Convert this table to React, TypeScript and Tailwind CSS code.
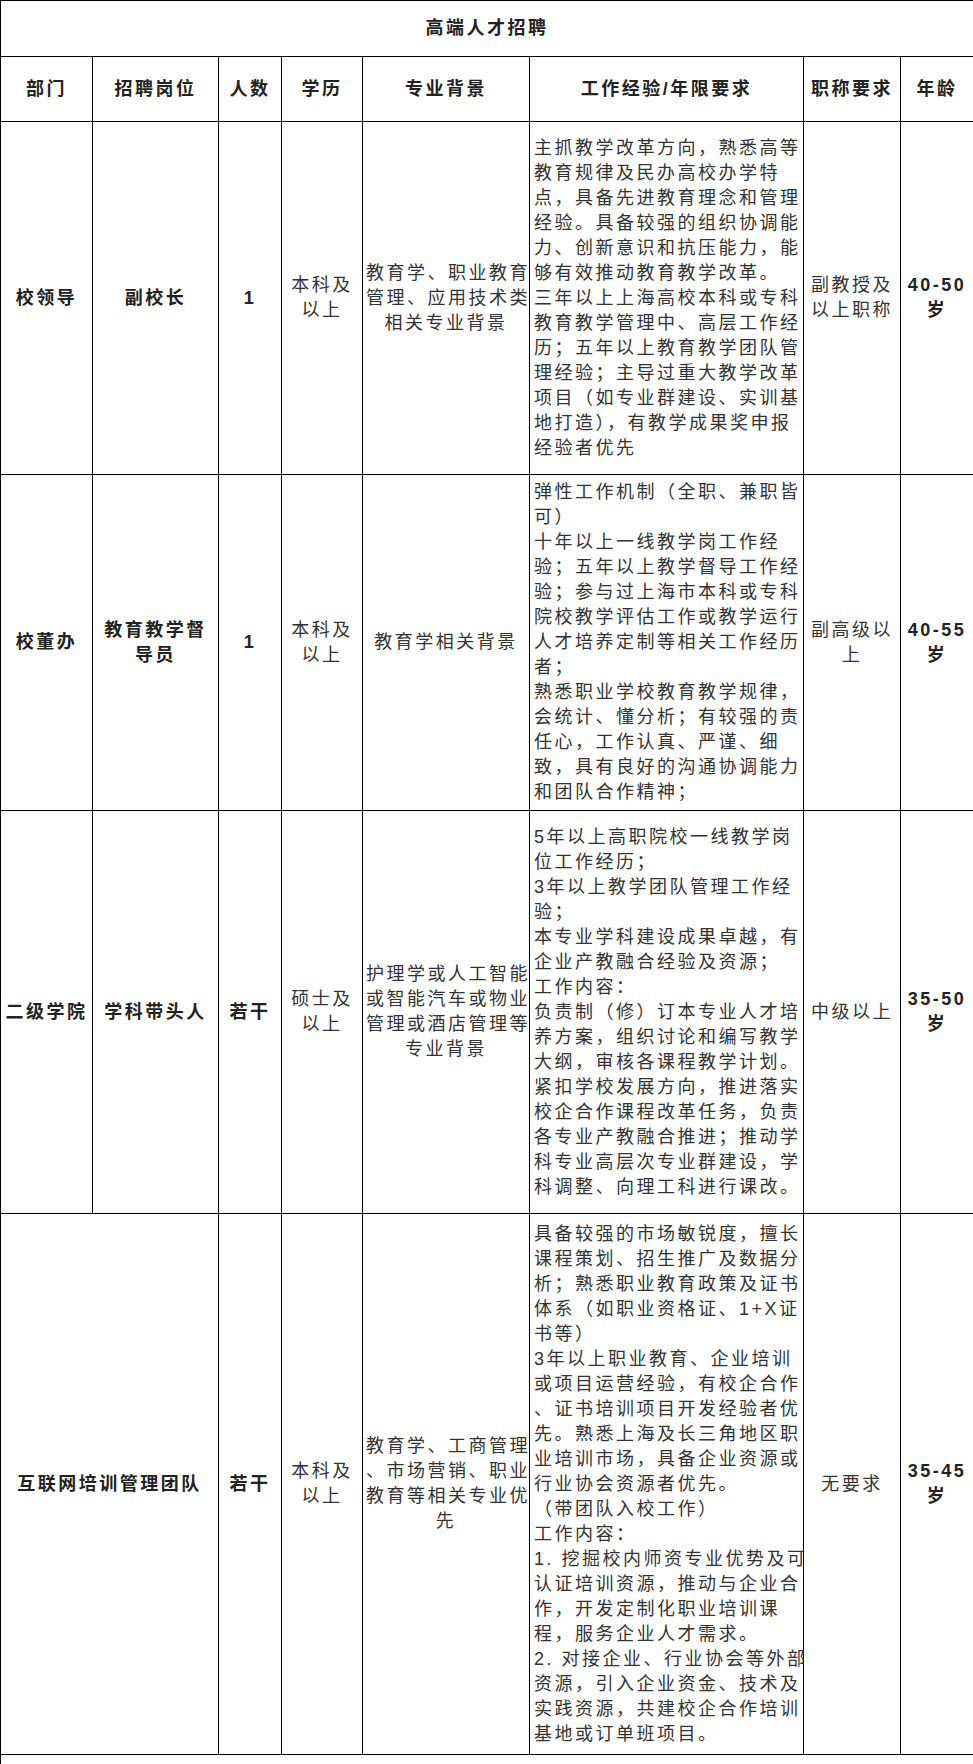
const font = '"Liberation Sans", "Noto Sans CJK SC", sans-serif';

type Row = {
  dept: string[];
  post?: string[];
  count: string;
  edu: string[];
  major: string[];
  exp: string[];
  title: string[];
  age: string[];
  height: string;
};

const rows: Row[] = [
  {
    dept: ["校领导"],
    post: ["副校长"],
    count: "1",
    edu: ["本科及", "以上"],
    major: ["教育学、职业教育", "管理、应用技术类", "相关专业背景"],
    exp: [
      "主抓教学改革方向，熟悉高等",
      "教育规律及民办高校办学特",
      "点，具备先进教育理念和管理",
      "经验。具备较强的组织协调能",
      "力、创新意识和抗压能力，能",
      "够有效推动教育教学改革。",
      "三年以上上海高校本科或专科",
      "教育教学管理中、高层工作经",
      "历；五年以上教育教学团队管",
      "理经验；主导过重大教学改革",
      "项目（如专业群建设、实训基",
      "地打造），有教学成果奖申报",
      "经验者优先",
    ],
    title: ["副教授及", "以上职称"],
    age: ["40-50", "岁"],
    height: "h-[353px]",
  },
  {
    dept: ["校董办"],
    post: ["教育教学督", "导员"],
    count: "1",
    edu: ["本科及", "以上"],
    major: ["教育学相关背景"],
    exp: [
      "弹性工作机制（全职、兼职皆",
      "可）",
      "十年以上一线教学岗工作经",
      "验；五年以上教学督导工作经",
      "验；参与过上海市本科或专科",
      "院校教学评估工作或教学运行",
      "人才培养定制等相关工作经历",
      "者；",
      "熟悉职业学校教育教学规律，",
      "会统计、懂分析；有较强的责",
      "任心，工作认真、严谨、细",
      "致，具有良好的沟通协调能力",
      "和团队合作精神；",
    ],
    title: ["副高级以", "上"],
    age: ["40-55", "岁"],
    height: "h-[336px]",
  },
  {
    dept: ["二级学院"],
    post: ["学科带头人"],
    count: "若干",
    edu: ["硕士及", "以上"],
    major: ["护理学或人工智能", "或智能汽车或物业", "管理或酒店管理等", "专业背景"],
    exp: [
      "5年以上高职院校一线教学岗",
      "位工作经历；",
      "3年以上教学团队管理工作经",
      "验；",
      "本专业学科建设成果卓越，有",
      "企业产教融合经验及资源；",
      "工作内容：",
      "负责制（修）订本专业人才培",
      "养方案，组织讨论和编写教学",
      "大纲，审核各课程教学计划。",
      "紧扣学校发展方向，推进落实",
      "校企合作课程改革任务，负责",
      "各专业产教融合推进；推动学",
      "科专业高层次专业群建设，学",
      "科调整、向理工科进行课改。",
    ],
    title: ["中级以上"],
    age: ["35-50", "岁"],
    height: "h-[403px]",
  },
  {
    dept: ["互联网培训管理团队"],
    count: "若干",
    edu: ["本科及", "以上"],
    major: ["教育学、工商管理", "、市场营销、职业", "教育等相关专业优", "先"],
    exp: [
      "具备较强的市场敏锐度，擅长",
      "课程策划、招生推广及数据分",
      "析；熟悉职业教育政策及证书",
      "体系（如职业资格证、1+X证",
      "书等）",
      "3年以上职业教育、企业培训",
      "或项目运营经验，有校企合作",
      "、证书培训项目开发经验者优",
      "先。熟悉上海及长三角地区职",
      "业培训市场，具备企业资源或",
      "行业协会资源者优先。",
      "（带团队入校工作）",
      "工作内容：",
      "1. 挖掘校内师资专业优势及可",
      "认证培训资源，推动与企业合",
      "作，开发定制化职业培训课",
      "程，服务企业人才需求。",
      "2. 对接企业、行业协会等外部",
      "资源，引入企业资金、技术及",
      "实践资源，共建校企合作培训",
      "基地或订单班项目。",
    ],
    title: ["无要求"],
    age: ["35-45", "岁"],
    height: "h-[541px]",
  },
];

const headers = ["部门", "招聘岗位", "人数", "学历", "专业背景", "工作经验/年限要求", "职称要求", "年龄"];

const Lines = ({ lines }: { lines: string[] }) => (
  <>
    {lines.map((l, i) => (
      <div key={i} className="whitespace-nowrap">
        {l}
      </div>
    ))}
  </>
);

const cell = "border border-black px-[3px] align-middle";

export default function App() {
  return (
    <div className="w-[973px] bg-white text-[#333] text-[18px] leading-[25px] tracking-[2.5px]" style={{ fontFamily: font }}>
      <table className="w-[973px] table-fixed border-collapse">
        <colgroup>
          <col className="w-[92px]" />
          <col className="w-[126px]" />
          <col className="w-[63px]" />
          <col className="w-[81px]" />
          <col className="w-[167px]" />
          <col className="w-[274px]" />
          <col className="w-[97px]" />
          <col className="w-[73px]" />
        </colgroup>
        <tbody>
          <tr className="h-[56px]">
            <td colSpan={8} className={`${cell} text-center font-bold text-[#222]`}>
              高端人才招聘
            </td>
          </tr>
          <tr className="h-[65px]">
            {headers.map((h) => (
              <td key={h} className={`${cell} text-center font-bold text-[#222] whitespace-nowrap`}>
                {h}
              </td>
            ))}
          </tr>
          {rows.map((r, i) => (
            <tr key={i} className={r.height}>
              <td colSpan={r.post ? 1 : 2} className={`${cell} text-center font-bold text-[#222]`}>
                <Lines lines={r.dept} />
              </td>
              {r.post && (
                <td className={`${cell} text-center font-bold text-[#222]`}>
                  <Lines lines={r.post} />
                </td>
              )}
              <td className={`${cell} text-center font-bold text-[#222]`}>{r.count}</td>
              <td className={`${cell} text-center`}>
                <Lines lines={r.edu} />
              </td>
              <td className={`${cell} text-center`}>
                <Lines lines={r.major} />
              </td>
              <td className={`${cell} text-left pl-[4px]`}>
                <Lines lines={r.exp} />
              </td>
              <td className={`${cell} text-center`}>
                <Lines lines={r.title} />
              </td>
              <td className={`${cell} text-center font-bold text-[#222]`}>
                <Lines lines={r.age} />
              </td>
            </tr>
          ))}
          <tr className="h-[12px]">
            <td colSpan={8} className="border-x border-t border-black"></td>
          </tr>
        </tbody>
      </table>
    </div>
  );
}
